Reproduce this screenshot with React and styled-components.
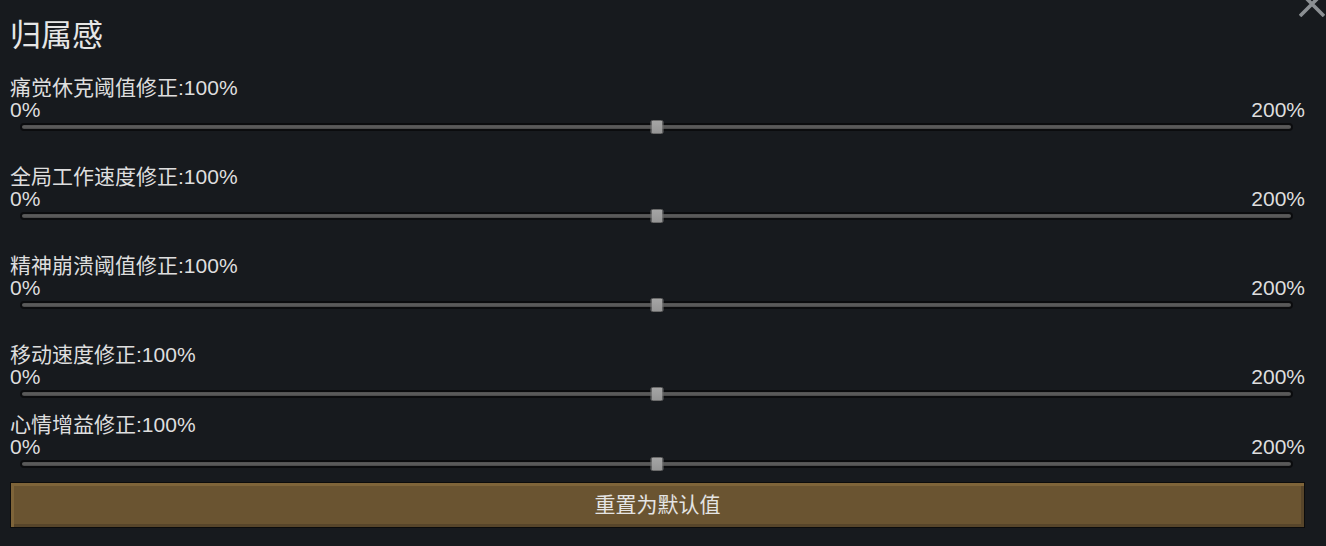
import React from 'react';
import styled, { createGlobalStyle } from 'styled-components';

const GlobalStyle = createGlobalStyle`
  html, body {
    margin: 0;
    padding: 0;
    background: #171a1e;
  }
  body {
    font-family: "Liberation Sans", "Noto Sans CJK SC", sans-serif;
    color: #dedede;
    overflow: hidden;
  }
`;

const Panel = styled.div`
  position: relative;
  width: 1326px;
  height: 546px;
  box-sizing: border-box;
  padding: 18px 21px 0 10px;
  display: flex;
  flex-direction: column;
  background: #171a1e;
`;

const Title = styled.h1`
  margin: 0;
  font-size: 31px;
  line-height: 36px;
  font-weight: normal;
  color: #e6e6e6;
`;

const CloseButton = styled.button`
  position: absolute;
  top: -9px;
  right: 1px;
  width: 26px;
  height: 26px;
  padding: 0;
  border: none;
  background: none;
  cursor: pointer;
`;

const Row = styled.div`
  display: flex;
  flex-direction: column;
  margin-top: ${p => p.$gap}px;
`;

const Label = styled.div`
  font-size: 21px;
  line-height: 22px;
  color: #dedede;
`;

const Range = styled.div`
  display: flex;
  justify-content: space-between;
  font-size: 21px;
  line-height: 22px;
  color: #dedede;
`;

const TrackWrap = styled.div`
  position: relative;
  height: 10px;
  margin: 1px 12px 0 10px;
  display: flex;
  align-items: center;
`;

const Track = styled.div`
  width: 100%;
  height: 8px;
  box-sizing: border-box;
  border: 2px solid #0b0c0e;
  border-radius: 4px;
  background: linear-gradient(#505050, #5e5e5e 50%, #464646);
`;

const Thumb = styled.div`
  position: absolute;
  top: -2px;
  width: 13px;
  height: 14px;
  box-sizing: border-box;
  transform: translateX(-50%);
  background: linear-gradient(#a5a5a5, #959595);
  border: 1px solid #6b6b6b;
  border-radius: 2px;
`;

const ResetButton = styled.button`
  margin-top: 13px;
  height: 46px;
  width: 100%;
  box-sizing: border-box;
  border: 1px solid #0c0c0c;
  background: #6a5431;
  box-shadow: inset 3px 3px 0 #7e6439, inset -3px -3px 0 #57452a;
  font-family: "Liberation Sans", "Noto Sans CJK SC", sans-serif;
  font-size: 21px;
  color: #e4e4e4;
  cursor: pointer;
  padding: 0 0 4px;
`;

const settings = [
  { label: '痛觉休克阈值修正', value: 100, gap: 23 },
  { label: '全局工作速度修正', value: 100, gap: 34 },
  { label: '精神崩溃阈值修正', value: 100, gap: 34 },
  { label: '移动速度修正', value: 100, gap: 34 },
  { label: '心情增益修正', value: 100, gap: 15 },
];

const Slider = ({ label, value, gap }) => (
  <Row $gap={gap}>
    <Label>{label}:{value}%</Label>
    <Range>
      <span>0%</span>
      <span>200%</span>
    </Range>
    <TrackWrap>
      <Track />
      <Thumb style={{ left: `${(value / 200) * 100}%` }} />
    </TrackWrap>
  </Row>
);

const App = () => (
  <>
    <GlobalStyle />
    <Panel>
      <CloseButton aria-label="close">
        <svg width="26" height="26" viewBox="0 0 26 26">
          <path d="M1 1 L25 25 M25 1 L1 25" stroke="#8b8f93" strokeWidth="3.6" />
        </svg>
      </CloseButton>
      <Title>归属感</Title>
      {settings.map(s => (
        <Slider key={s.label} {...s} />
      ))}
      <ResetButton>重置为默认值</ResetButton>
    </Panel>
  </>
);

export default App;
